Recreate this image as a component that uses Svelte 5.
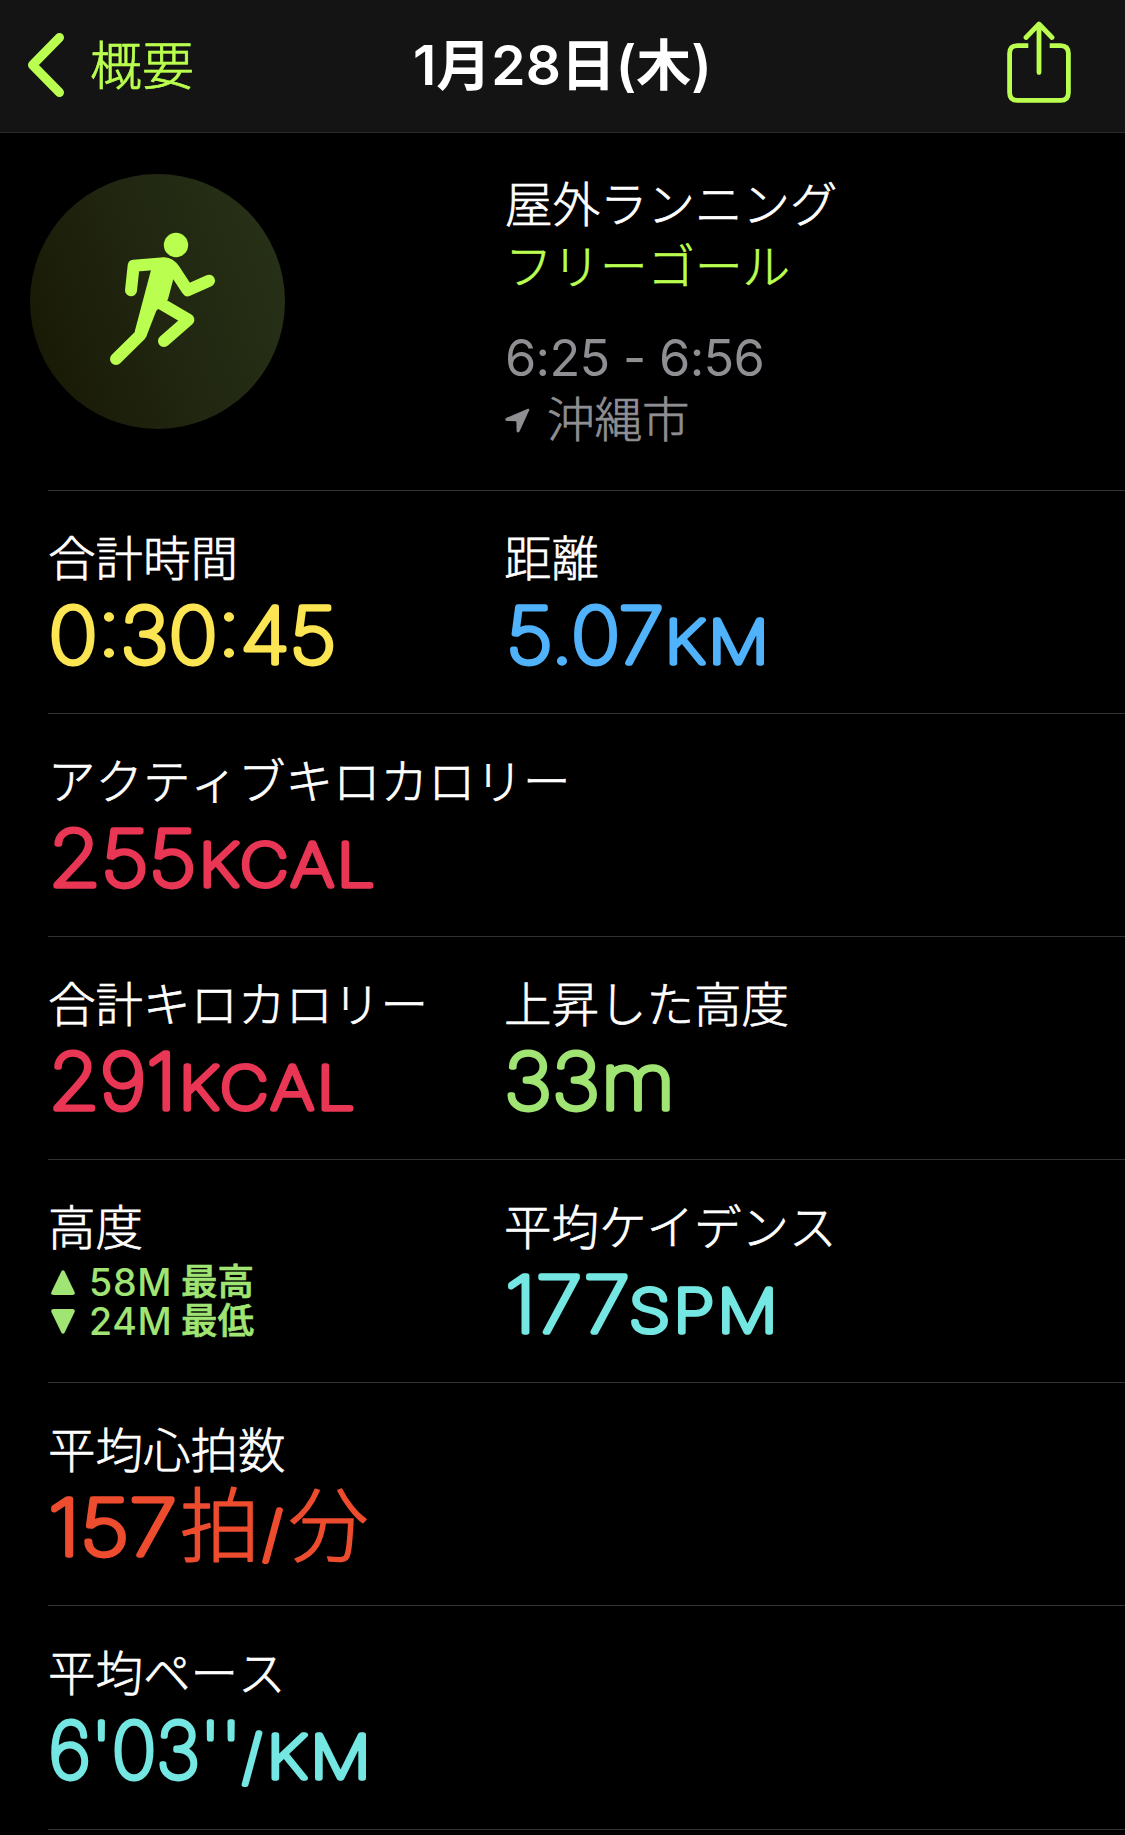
<script>
  // Each value is a list of runs: [text, x, length, kind]
  const rows = [
    [
      { label: '合計時間', tone: 'yellow', runs: [['0:30:45', 0.5, 288, 'num']] },
      { label: '距離', tone: 'blue', runs: [['5.07', 2, 158, 'num'], ['KM', 161, 107, 'unit']] }
    ],
    [{ label: 'アクティブキロカロリー', tone: 'pink', runs: [['255', 0.5, 148, 'num'], ['KCAL', 151, 179, 'unit']] }],
    [
      { label: '合計キロカロリー', tone: 'pink', runs: [['291', 0.5, 128, 'num'], ['KCAL', 131, 179, 'unit']] },
      { label: '上昇した高度', tone: 'lime', runs: [['33', 0, 96, 'num'], ['m', 97, 74, 'num']] }
    ],
    [
      { label: '高度', range: [['up', '58M', '最高'], ['down', '24M', '最低']] },
      { label: '平均ケイデンス', tone: 'cyan', runs: [['177', 1, 125, 'num'], ['SPM', 125, 152, 'unit']] }
    ],
    [{ label: '平均心拍数', tone: 'orange', runs: [['157', 0, 129, 'num'], ['拍', 132, 80, 'kanji'], ['/', 215, null, 'unit'], ['分', 240.5, 80, 'kanji']] }],
    [{ label: '平均ペース', tone: 'cyan', runs: [["6'03''", 0.5, 193, 'num'], ['/', 194.5, null, 'unit'], ['KM', 219, 107, 'unit']] }]
  ];
</script>

<div class="screen">
  <header>
    <button class="back">
      <svg width="40" height="66" viewBox="0 0 40 66" fill="none"><path d="M33.5 5.5 6.5 33 33.5 60.5" /></svg>
      <span>概要</span>
    </button>
    <h1>1月28日(木)</h1>
    <svg class="share" width="64" height="82" viewBox="0 0 64 82" fill="none">
      <path d="M21.3 24.6H10.5Q2.6 24.6 2.6 32.5V71.5Q2.6 79.4 10.5 79.4H53.5Q61.4 79.4 61.4 71.5V32.5Q61.4 24.6 53.5 24.6H42.7" />
      <path class="tip" d="M32 51.500V3.5M19 16.5 32 3 45 16.5" />
    </svg>
  </header>

  <section class="hero">
    <div class="badge">
      <svg width="255" height="255" viewBox="30 42 765 765">
        <circle cx="468" cy="255" r="36.5" />
        <path d="M393 330 344 515 378 532 409 452 444 418 460 357 475 320 435 293 393 300Z" />
        <path class="limb" d="M333 391 341 317 432 310Q450 311 463 330L503 391 567 362" />
        <path class="limb" d="M423 431 505 479 432 543M288 597 361 525 385 450" />
      </svg>
    </div>
    <div class="info">
      <p>屋外ランニング</p>
      <p class="goal">フリーゴール</p>
      <p class="time">6:25 - 6:56</p>
      <p class="place">
        <svg width="25" height="25" viewBox="0 0 25 25"><path d="M1.500 9.800 22.800.8Q24.800.2 24.200 2.300L14.500 23.500Q12.700 25.800 11.600 23.300L11.400 14Q11.400 13.200 10.500 13.200L1.500 13Q-1 11.500 1.500 9.800Z" /></svg>
        <span>沖縄市</span>
      </p>
    </div>
  </section>

  {#each rows as cells}
    <section class="row">
      {#each cells as cell}
        <div class="cell">
          <h2>{cell.label}</h2>
          {#if cell.range}
            <div class="range">
              {#each cell.range as [dir, height, name]}
                <div class="extreme">
                  <svg class={dir} width="24" height="25" viewBox="0 0 24 25"><path d="M10.300 1.500Q12-1.200 13.700 1.500L23.600 22Q24.500 25 21.500 25H2.500Q-.5 25 .4 22Z" /></svg>
                  <span class="height">{height}</span>
                  <span class="name">{name}</span>
                </div>
              {/each}
            </div>
          {:else}
            <svg class="value {cell.tone}" width="440" height="80">
              {#each cell.runs as [text, x, length, kind]}
                <text class={kind} {x} y="69.5" textLength={length} lengthAdjust="spacingAndGlyphs">{text}</text>
              {/each}
            </svg>
          {/if}
        </div>
      {/each}
    </section>
  {/each}
  <div class="end"></div>
</div>

<style>
  :global(body) {
    margin: 0;
    background: #000;
  }
  .screen {
    height: 1835px;
    overflow: hidden;
    background: #000;
    color: #fff;
    font-family: Inter, 'Noto Sans CJK JP', sans-serif;
  }
  header {
    display: grid;
    grid-template-columns: 1fr auto 1fr;
    align-items: center;
    box-sizing: border-box;
    height: 133px;
    padding-bottom: 3px;
    border-bottom: 1px solid #2b2b2c;
    background: #141414;
  }
  .back {
    display: flex;
    align-items: center;
    gap: 24px;
    margin-left: 26px;
    padding: 0;
    border: 0;
    background: none;
    color: #baff4f;
    font: 300 52px/70px 'Noto Sans CJK JP', sans-serif;
  }
  .back span {
    margin-top: -4px;
    -webkit-text-stroke: 0.7px;
  }
  .back path {
    stroke: #baff4f;
    stroke-width: 9;
    stroke-linecap: round;
    stroke-linejoin: round;
  }
  h1 {
    margin: 0;
    font-size: 55px;
    line-height: 70px;
    font-weight: 600;
    white-space: nowrap;
  }
  .share {
    justify-self: end;
    margin: 0 54.5px 6px 0;
  }
  .share path {
    stroke: #baff4f;
    stroke-width: 4.8;
  }
  .share .tip {
    stroke-linecap: round;
    stroke-linejoin: round;
  }
  .hero {
    display: grid;
    grid-template-columns: 475px 1fr;
    box-sizing: border-box;
    height: 356.55px;
    padding: 41px 0 0 30px;
  }
  .badge {
    width: 255px;
    height: 255px;
    border-radius: 50%;
    background: linear-gradient(70deg, #191a06 10%, #20250f 45%, #283319 100%);
  }
  .badge svg {
    display: block;
    fill: #baff4f;
  }
  .limb {
    fill: none;
    stroke: #baff4f;
    stroke-width: 36;
    stroke-linecap: round;
    stroke-linejoin: round;
  }
  .info p {
    margin: 0;
    font-size: 47.5px;
    line-height: 61px;
    font-weight: 300;
    font-kerning: none;
    white-space: nowrap;
    -webkit-text-stroke: 0.7px;
  }
  .info .goal {
    margin-top: 1px;
    color: #baff4f;
  }
  .info .time {
    margin-top: 30px;
    font-size: 50.5px;
    font-weight: 400;
    letter-spacing: -0.7px;
    color: #8e8e93;
    -webkit-text-stroke: 0;
  }
  .info .place {
    display: flex;
    align-items: center;
    gap: 17px;
    margin-top: 1px;
    color: #8e8e93;
  }
  .place svg {
    margin-top: 2px;
    fill: #8e8e93;
  }
  .row {
    display: grid;
    grid-template-columns: 456px 1fr;
    box-sizing: border-box;
    height: 223.2px;
    margin-left: 48px;
    padding-top: 37px;
    border-top: 1px solid #323234;
  }
  .end {
    margin-left: 48px;
    border-top: 1px solid #323234;
  }
  h2 {
    margin: 0;
    font-size: 47.5px;
    line-height: 61px;
    font-weight: 300;
    font-kerning: none;
    white-space: nowrap;
    -webkit-text-stroke: 0.7px;
  }
  .value {
    display: block;
    margin-top: 4px;
    overflow: visible;
    stroke-linejoin: round;
    stroke-linecap: round;
  }
  .num {
    font-size: 77px;
    font-weight: 100;
    stroke-width: 5.4px;
  }
  .unit {
    font-size: 59px;
    font-weight: 100;
    letter-spacing: 3px;
    stroke-width: 5.4px;
  }
  .kanji {
    font-size: 81px;
    font-weight: 300;
    stroke-width: 1.6px;
  }
  .yellow { fill: #fbe552; stroke: #fbe552; }
  .blue { fill: #50b2fa; stroke: #50b2fa; }
  .pink { fill: #e93654; stroke: #e93654; }
  .lime { fill: #a0e474; stroke: #a0e474; }
  .cyan { fill: #75e7e3; stroke: #75e7e3; }
  .orange { fill: #ed4c2e; stroke: #ed4c2e; }
  .range {
    margin-top: 5px;
    color: #a0e474;
  }
  .extreme {
    display: flex;
    align-items: center;
    height: 39px;
    margin-left: 3px;
    font-size: 36.5px;
    line-height: 39px;
  }
  .extreme svg {
    fill: #a0e474;
  }
  .extreme .down {
    transform: scaleY(-1);
  }
  .height {
    width: 92px;
    margin-left: 14px;
    font-size: 37.5px;
    font-weight: 500;
    letter-spacing: 0.7px;
  }
  .name {
    font-weight: 500;
    -webkit-text-stroke: 0.7px;
  }
</style>
